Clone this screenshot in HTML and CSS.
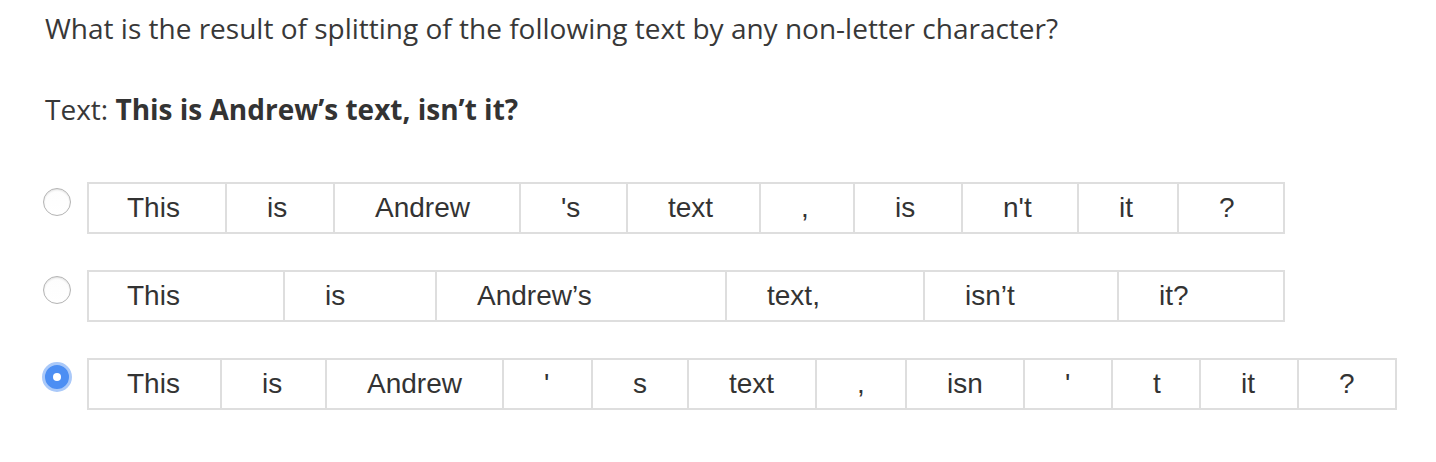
FILE: index.html
```html
<!DOCTYPE html>
<html>
<head>
<meta charset="utf-8">
<link rel="stylesheet" href="styles.css">
</head>
<body>
<div class="page">
  <p class="question">What is the result of splitting of the following text by any non-letter character?</p>
  <p class="sample">Text: <b>This is Andrew’s text, isn’t it?</b></p>
  <div class="options">
    <div class="option">
      <span class="radio"></span>
      <div class="tokens">
        <span class="tok" style="width:140px">This</span>
        <span class="tok" style="width:108px">is</span>
        <span class="tok" style="width:186px">Andrew</span>
        <span class="tok" style="width:107px">'s</span>
        <span class="tok" style="width:133px">text</span>
        <span class="tok" style="width:94px">,</span>
        <span class="tok" style="width:108px">is</span>
        <span class="tok" style="width:116px">n't</span>
        <span class="tok" style="width:100px">it</span>
        <span class="tok" style="width:106px">?</span>
      </div>
    </div>
    <div class="option">
      <span class="radio"></span>
      <div class="tokens">
        <span class="tok" style="width:198px">This</span>
        <span class="tok" style="width:152px">is</span>
        <span class="tok" style="width:290px">Andrew’s</span>
        <span class="tok" style="width:198px">text,</span>
        <span class="tok" style="width:194px">isn’t</span>
        <span class="tok" style="width:166px">it?</span>
      </div>
    </div>
    <div class="option">
      <span class="radio checked"></span>
      <div class="tokens">
        <span class="tok" style="width:135px">This</span>
        <span class="tok" style="width:105px">is</span>
        <span class="tok" style="width:177px">Andrew</span>
        <span class="tok" style="width:89px">'</span>
        <span class="tok" style="width:96px">s</span>
        <span class="tok" style="width:128px">text</span>
        <span class="tok" style="width:90px">,</span>
        <span class="tok" style="width:118px">isn</span>
        <span class="tok" style="width:88px">'</span>
        <span class="tok" style="width:88px">t</span>
        <span class="tok" style="width:98px">it</span>
        <span class="tok" style="width:98px">?</span>
      </div>
    </div>
  </div>
</div>
</body>
</html>
```

FILE: styles.css
```css
* { box-sizing: border-box; }
html, body { margin: 0; padding: 0; background: #fff; }
.page {
  padding: 9px 0 0 45px;
  font-family: "Open Sans", sans-serif;
  color: #383838;
}
.question {
  margin: 0;
  font-size: 28px;
  line-height: 38px;
  font-weight: 400;
}
.sample {
  margin: 43px 0 0 0;
  font-size: 28px;
  line-height: 38px;
}
.sample b { font-weight: 700; color: #333; }
.options {
  margin-top: 54px;
  margin-left: -2px;
  display: flex;
  flex-direction: column;
  gap: 36px;
}
.option {
  display: flex;
  align-items: flex-start;
}
.radio {
  width: 28px;
  height: 28px;
  margin-top: 6px;
  margin-right: 16px;
  border-radius: 50%;
  border: 1px solid #b4b4b4;
  background: linear-gradient(#fdfdfd, #ffffff);
  box-shadow: inset 0 1px 2px rgba(0,0,0,0.12);
  flex: none;
  position: relative;
}
.radio.checked {
  width: 30px;
  height: 30px;
  margin-top: 4px;
  margin-left: -1px;
  margin-right: 15px;
  border: 3px solid #aac9f9;
  background: #4c8ef3;
  box-shadow: none;
}
.radio.checked::after {
  content: "";
  position: absolute;
  left: 50%;
  top: 50%;
  width: 8px;
  height: 8px;
  margin: -4px 0 0 -4px;
  border-radius: 50%;
  background: #fff;
}
.tokens {
  display: flex;
  border-top: 2px solid #dedede;
  border-bottom: 2px solid #dedede;
  border-left: 2px solid #dedede;
  height: 52px;
}
.tok {
  flex: none;
  border-right: 2px solid #dedede;
  text-align: left;
  padding-left: 40px;
  white-space: nowrap;
  font-family: "Liberation Sans", Arial, sans-serif;
  font-size: 28px;
  line-height: 48px;
  color: #333;
}
.tok:first-child { margin-left: -2px; }
```
